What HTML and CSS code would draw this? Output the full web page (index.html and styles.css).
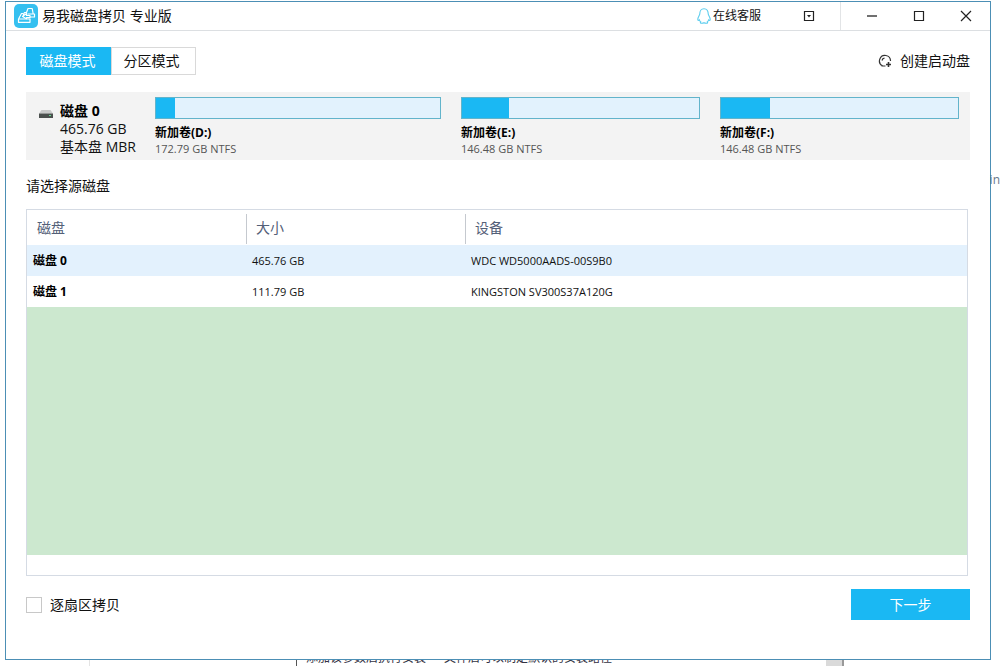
FILE: index.html
```html
<!DOCTYPE html>
<html lang="zh-CN">
<head>
<meta charset="utf-8">
<meta name="viewport" content="width=device-width, initial-scale=1">
<title>易我磁盘拷贝 专业版</title>
<link rel="stylesheet" href="styles.css">
</head>
<body>
<div class="desktop">
  <span class="behind-word">in</span>
  <span class="behind-rule"></span>
  <div class="behind-pane">添加该参数后执行安装<span class="behind-gap"></span>文件后可以制定默认的安装路径</div>
  <span class="behind-scroll"></span>
  <main class="window">
    <header class="titlebar">
      <svg class="logo" viewBox="0 0 24 24" aria-hidden="true">
        <rect width="24" height="24" rx="5" fill="#35c0f0"/>
        <g fill="none" stroke="#fff" stroke-width="1.2" stroke-linejoin="round">
          <path d="M4.500 15h11.500v3.300h-11.500zM4.500 15l3-5.500h2"/>
          <path d="M9 11.500l1.500-3h2l1.500-4h4.200l1 5.500M16 13h4.500v-3h-7M8.500 12.500l4-3v2h3.500v2.200h-3.500v1z"/>
        </g>
      </svg>
      <h1 class="title">易我磁盘拷贝 专业版</h1>
      <button class="support" type="button">
        <svg class="support-icon" viewBox="0 0 14 16" aria-hidden="true"><path d="M7 .8c-3 0-4.200 2.200-4.200 5C2.800 7.500.8 9 .8 11.500c0 1.200.7 1.200 1.500.4.300 1 .8 1.600 1.400 2-.8.800-.2 1.300 1 1.300S6.500 15 7 14.700c.5.300 1.100.5 2.300.5s1.800-.5 1-1.300c.6-.4 1.100-1 1.400-2 .8.800 1.500.8 1.500-.4 0-2.500-2-4-2-5.700 0-2.800-1.200-5-4.200-5z" fill="none" stroke="#5ccdee" stroke-width="1.100"/></svg>
        <span>在线客服</span>
      </button>
      <button class="menu-btn" type="button" aria-label="菜单">
        <svg class="glyph" viewBox="0 0 12 12"><path d="M1.500 1.500h9v9h-9z" fill="none" stroke="#222" stroke-width="1.200"/><path d="M4 5h4L6 7.500z" fill="#222"/></svg>
      </button>
      <div class="window-controls">
        <button class="control" type="button" aria-label="最小化"><svg class="glyph" viewBox="0 0 12 12"><path d="M1 6h10" stroke="#222" stroke-width="1.300"/></svg></button>
        <button class="control" type="button" aria-label="最大化"><svg class="glyph" viewBox="0 0 12 12"><path d="M1.500 1.500h9v9h-9z" fill="none" stroke="#222" stroke-width="1.200"/></svg></button>
        <button class="control" type="button" aria-label="关闭"><svg class="glyph" viewBox="0 0 12 12"><path d="M1 1l10 10M11 1L1 11" stroke="#222" stroke-width="1.200"/></svg></button>
      </div>
    </header>
    <section class="content">
      <nav class="toolbar">
        <div class="modes">
          <button class="mode mode-active" type="button">磁盘模式</button>
          <button class="mode" type="button">分区模式</button>
        </div>
        <button class="boot" type="button">
          <svg class="boot-icon" viewBox="0 0 14 14" aria-hidden="true"><g fill="none" stroke="#333" stroke-width="1.200"><path d="M4.500 11.800A5.500 5.500 0 1 1 12.500 7M4 6.500a3 3 0 0 1 2.500-2.300M3.500 12h4"/><path d="M10.500 8v5M8 10.500h5" stroke-width="1.600"/></g></svg>
          <span>创建启动盘</span>
        </button>
      </nav>
      <section class="disk-map">
        <div class="disk">
          <svg class="disk-icon" viewBox="0 0 14 8" aria-hidden="true"><path d="M2.500 0h9L14 3.500H0z" fill="#c9caca"/><path d="M0 3.500h14V8H0z" fill="#4b504e"/><path d="M10 5.500h2" stroke="#65d98e"/></svg>
          <div class="disk-info"><strong class="disk-name">磁盘 0</strong><span>465.76 GB</span><span>基本盘 MBR</span></div>
        </div>
        <div class="volumes">
          <div class="volume volume-wide"><div class="bar"><div class="used" style="width:6.700%"></div></div><strong class="volume-name">新加卷(D:)</strong><span class="volume-size">172.79 GB NTFS</span></div>
          <div class="volume"><div class="bar"><div class="used" style="width:19.800%"></div></div><strong class="volume-name">新加卷(E:)</strong><span class="volume-size">146.48 GB NTFS</span></div>
          <div class="volume"><div class="bar"><div class="used" style="width:20.500%"></div></div><strong class="volume-name">新加卷(F:)</strong><span class="volume-size">146.48 GB NTFS</span></div>
        </div>
      </section>
      <h2 class="prompt">请选择源磁盘</h2>
      <div class="list">
        <table class="disks">
          <thead><tr><th class="col-disk">磁盘</th><th class="col-size">大小</th><th>设备</th></tr></thead>
          <tbody>
            <tr class="selected"><td class="name">磁盘 0</td><td>465.76 GB</td><td>WDC WD5000AADS-00S9B0</td></tr>
            <tr><td class="name">磁盘 1</td><td>111.79 GB</td><td>KINGSTON SV300S37A120G</td></tr>
          </tbody>
        </table>
        <div class="list-empty"></div>
      </div>
      <footer class="actions">
        <label class="sector"><input class="tick" type="checkbox"><span>逐扇区拷贝</span></label>
        <button class="next" type="button">下一步</button>
      </footer>
    </section>
  </main>
</div>
</body>
</html>
```
FILE: styles.css
```css
* { box-sizing: border-box; }
body {
  margin: 0;
  background: #fff;
  color: #111;
  font: 14px/18px "Open Sans", "Noto Sans CJK SC", sans-serif;
}
button { margin: 0; padding: 0; border: 0; background: none; color: inherit; font: inherit; }
h1, h2 { margin: 0; font-weight: 400; }

.desktop { position: relative; display: flex; height: 100vh; padding: 1px 9px 6px 5px; overflow: hidden; }
.behind-word { position: absolute; z-index: 1; right: 0; top: 171px; color: #68788a; font-size: 12px; }
.behind-rule { position: absolute; left: 89px; bottom: 0; width: 1px; height: 6px; background: #e4e4e4; }
.behind-pane { position: absolute; left: 296px; bottom: 0; display: flex; height: 18px; padding-left: 9px; border-left: 1px solid #555; color: #334; font-size: 12px; line-height: 20px; white-space: nowrap; }
.behind-gap { width: 18px; }
.behind-scroll { position: absolute; right: 156px; bottom: 0; width: 18px; height: 6px; border-right: 2px solid #999; background: #dadada; }

.window { position: relative; flex: 1; display: flex; flex-direction: column; min-width: 0; border: 1px solid #4c8fb5; background: #fff; }

.titlebar { display: flex; align-items: center; height: 29px; flex: none; border-bottom: 1px solid #dcdfe2; }
.logo { width: 24px; height: 24px; margin-left: 8px; }
.title { flex: 1; margin-left: 4px; font-size: 14px; line-height: 20px; }
.support { display: flex; align-items: center; gap: 2px; margin-right: 42px; font-size: 12px; }
.support-icon { width: 14px; height: 16px; }
.glyph { display: block; width: 12px; height: 12px; }
.menu-btn { margin-right: 25px; }
.window-controls { display: flex; align-items: center; align-self: stretch; gap: 35px; padding: 0 18px 0 25px; border-left: 1px solid #e2e4e6; }

.content { flex: 1; display: flex; flex-direction: column; min-height: 0; padding: 16px 20px 39px; }
.toolbar { display: flex; justify-content: space-between; align-items: center; }
.modes { display: flex; }
.mode { width: 85px; height: 28px; padding-right: 4px; border: 1px solid #d9d9d9; }
.mode-active { padding-right: 2px; border-color: #1ab8f3; background: #1ab8f3; color: #fff; }
.boot { display: flex; align-items: center; gap: 8px; }
.boot-icon { width: 14px; height: 14px; }

.disk-map { display: flex; height: 68px; flex: none; margin-top: 17px; padding: 5px 11px 0 13px; background: #f3f3f3; }
.disk { display: flex; flex: none; width: 116px; gap: 7px; padding-top: 5px; }
.disk-icon { width: 14px; height: 8px; margin-top: 8px; flex: none; }
.disk-info { display: flex; flex-direction: column; font-size: 14px; white-space: nowrap; }
.disk-name { color: #000; font-weight: 700; }
.volumes { flex: 1; display: flex; gap: 20px; }
.volume { flex: 239; display: flex; flex-direction: column; min-width: 0; }
.volume-wide { flex-grow: 286; }
.bar { display: flex; height: 22px; margin-bottom: 6px; border: 1px solid #62b4cb; background: #e2f2fd; }
.used { background: #1ab8f3; }
.volume-name { color: #000; font-size: 12px; line-height: 16px; }
.volume-size { color: #555; font-size: 11px; line-height: 16px; }

.prompt { margin: 17px 0 14px; font-size: 14px; line-height: 18px; }
.list { flex: 1; display: flex; flex-direction: column; margin-right: 2px; padding-bottom: 20px; border: 1px solid #d5dbe4; }
.disks { width: 100%; border-collapse: collapse; table-layout: fixed; }
.disks th { position: relative; height: 35px; padding: 0 0 0 10px; color: #536078; font-size: 14px; font-weight: 400; text-align: left; }
.disks th + th::before { content: ""; position: absolute; left: 0; top: 4px; bottom: 1px; width: 1px; background: #c5c9cf; }
.col-disk, .col-size { width: 219px; }
.disks td { height: 31px; padding: 0 0 0 6px; font-size: 11px; }
.disks .name { color: #000; font-size: 12px; font-weight: 700; }
.selected { background: #e3f1fd; }
.list-empty { flex: 1; background: #cce8cf; }

.actions { display: flex; justify-content: space-between; align-items: center; margin-top: 13px; }
.sector { display: flex; align-items: center; gap: 8px; }
.tick { appearance: none; width: 16px; height: 16px; margin: 0; border: 1px solid #c8c8c8; background: #fff; }
.tick:checked { background: #1ab8f3; }
.next { width: 119px; height: 31px; background: #1ab8f3; color: #fff; }
```
